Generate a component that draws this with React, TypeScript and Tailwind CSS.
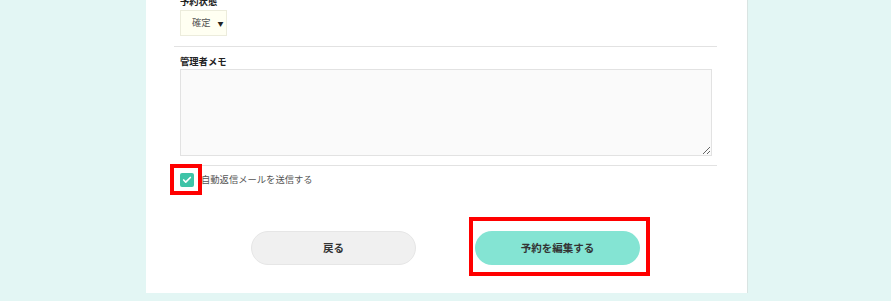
import { Check } from 'lucide-react';

const jp = { fontFamily: '"Noto Sans CJK JP", "Noto Sans", sans-serif' };

export default function App() {
  return (
    <div className="w-full h-[301px] bg-[#e3f6f4] overflow-hidden" style={jp}>
      <div className="ml-[146px] w-[602px] h-[293px] bg-white border-r border-[#d9e4e2] overflow-hidden">
        <div className="pl-[28px] pr-[30px] -mt-[6px]">
          {/* 予約状態 */}
          <div className="px-[6px] pb-[10px] border-b border-[#e2e2e2]">
            <div className="text-[9.3px] leading-[14px] font-bold text-[#222]">予約状態</div>
            <div className="mt-[2px] w-[47px] h-[26px] flex items-center gap-[7px] pl-[11px] bg-[#fffff2] border border-[#ececdc]">
              <span className="text-[9.3px] text-[#555]">確定</span>
              <span className="text-[6px] text-[#222]">▼</span>
            </div>
          </div>

          {/* 管理者メモ */}
          <div className="pl-[6px] pr-[5px] pt-[8px] pb-[9px] border-b border-[#e2e2e2]">
            <div className="text-[9.3px] leading-[13px] font-bold text-[#222]">管理者メモ</div>
            <textarea className="mt-[1px] block w-full h-[87px] bg-[#fafafa] border border-[#e2e2e2] resize-y outline-none" />
          </div>

          {/* 自動返信 */}
          <div className="relative pl-[6px] pt-[7px] flex items-center gap-[7px]">
            <span className="w-[14px] h-[14px] bg-[#3ec3a7] rounded-[2px] flex items-center justify-center">
              <Check size={10} strokeWidth={4} className="text-white" />
            </span>
            <span className="text-[9.3px] text-[#555]">自動返信メールを送信する</span>
            <div className="absolute left-[-4px] top-[-2px] w-[32px] h-[31px] border-[4px] border-[#ff0000]" />
          </div>

          {/* Buttons */}
          <div className="mt-[44px] flex justify-center gap-[59px]">
            <button className="w-[165px] h-[34px] rounded-full bg-[#f0f0f0] border border-[#e6e6e6] text-[10.5px] font-bold text-[#333]">
              戻る
            </button>
            <div className="relative">
              <button className="w-[165px] h-[34px] rounded-full bg-[#84e4d3] text-[10.5px] font-bold text-[#333]">
                予約を編集する
              </button>
              <div className="absolute left-[-6px] top-[-14px] w-[181px] h-[59px] border-[4px] border-[#ff0000]" />
            </div>
          </div>
        </div>
      </div>
    </div>
  );
}
